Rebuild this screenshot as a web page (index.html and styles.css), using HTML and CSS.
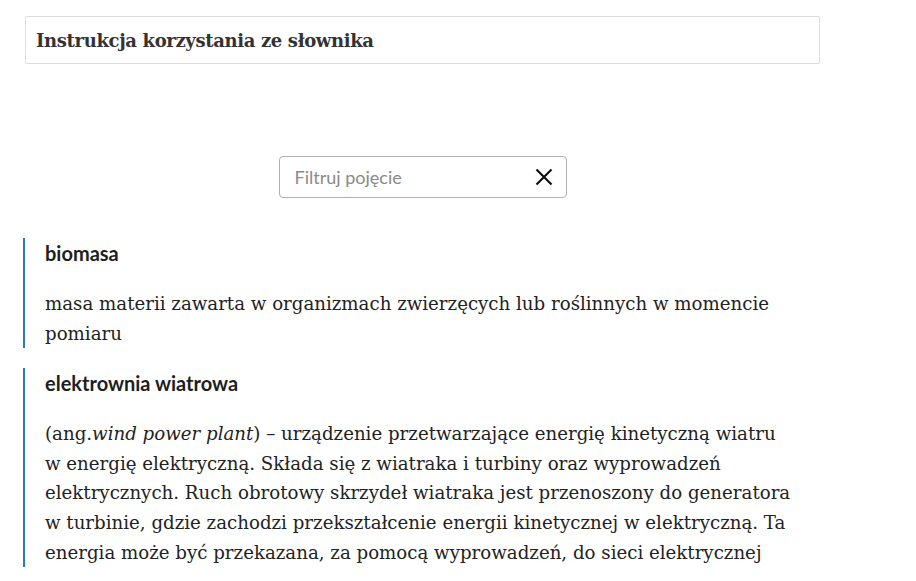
FILE: index.html
```html
<!DOCTYPE html>
<html lang="pl">
<head>
<meta charset="utf-8">
<title>Słownik</title>
<link rel="stylesheet" href="styles.css">
</head>
<body>
<div class="page">
  <div class="title-box">
    <h1 class="title">Instrukcja korzystania ze słownika</h1>
  </div>
  <div class="search-row">
    <div class="search">
      <input class="search-input" type="text" placeholder="Filtruj pojęcie">
      <button class="clear" type="button" aria-label="Wyczyść">
        <svg width="18" height="18" viewBox="0 0 18 18"><path d="M1.5 1.5 L16.5 16.5 M16.5 1.5 L1.5 16.5" stroke="#111" stroke-width="2.2" fill="none"/></svg>
      </button>
    </div>
  </div>
  <div class="entries">
    <div class="entry">
      <div class="term">biomasa</div>
      <div class="def">masa materii zawarta w&nbsp;organizmach zwierzęcych lub roślinnych w&nbsp;momencie pomiaru</div>
    </div>
    <div class="entry">
      <div class="term">elektrownia wiatrowa</div>
      <div class="def">(ang.<em>wind power plant</em>) – urządzenie przetwarzające energię kinetyczną wiatru w&nbsp;energię elektryczną. Składa się z&nbsp;wiatraka i&nbsp;turbiny oraz wyprowadzeń elektrycznych. Ruch obrotowy skrzydeł wiatraka jest przenoszony do generatora w&nbsp;turbinie, gdzie zachodzi przekształcenie energii kinetycznej w&nbsp;elektryczną. Ta energia może być przekazana, za pomocą wyprowadzeń, do sieci elektrycznej lub magazynowana w&nbsp;akumulatorach.</div>
    </div>
  </div>
</div>
</body>
</html>
```
FILE: styles.css
```css
html, body {
  margin: 0;
  padding: 0;
  background: #fff;
}
body {
  overflow: hidden;
}
.page {
  width: 797px;
  height: 567px;
  box-sizing: border-box;
  overflow: hidden;
  margin-left: 23px;
  padding-top: 16px;
}
.title-box {
  height: 46px;
  margin-left: 2px;
  border: 1px solid #dcdcdc;
  border-radius: 2px;
  display: flex;
  align-items: center;
  padding: 0 10px;
}
.title {
  margin: 0;
  font-family: "DejaVu Serif", serif;
  font-weight: bold;
  font-size: 18px;
  color: #333;
  letter-spacing: -0.35px;
}
.search-row {
  display: flex;
  justify-content: center;
  margin-top: 92px;
  margin-left: 2px;
}
.search {
  width: 286px;
  height: 40px;
  border: 1px solid #b0b0b0;
  border-radius: 4px;
  display: flex;
  align-items: center;
}
.search-input {
  flex: 1;
  min-width: 0;
  border: none;
  outline: none;
  background: transparent;
  padding: 0 0 0 15px;
  font-family: Lato, sans-serif;
  font-size: 18px;
  color: #333;
  height: 40px;
}
.search-input::placeholder {
  color: #8a8a8a;
}
.clear {
  border: none;
  background: transparent;
  padding: 0;
  margin-right: 13px;
  width: 18px;
  height: 18px;
  display: flex;
}
.entries {
  margin-top: 40px;
  display: flex;
  flex-direction: column;
  gap: 20px;
}
.entry {
  border-left: 2px solid #2f78bf;
  padding-left: 20px;
}
.term {
  font-family: Lato, sans-serif;
  font-weight: bold;
  font-size: 20px;
  line-height: 30px;
  color: #1e1e1e;
}
.def {
  margin-top: 21px;
  font-family: "DejaVu Serif", serif;
  font-size: 18.2px;
  line-height: 29.6px;
  color: #222;
  padding-right: 26px;
}
.def em {
  font-style: italic;
}
```
